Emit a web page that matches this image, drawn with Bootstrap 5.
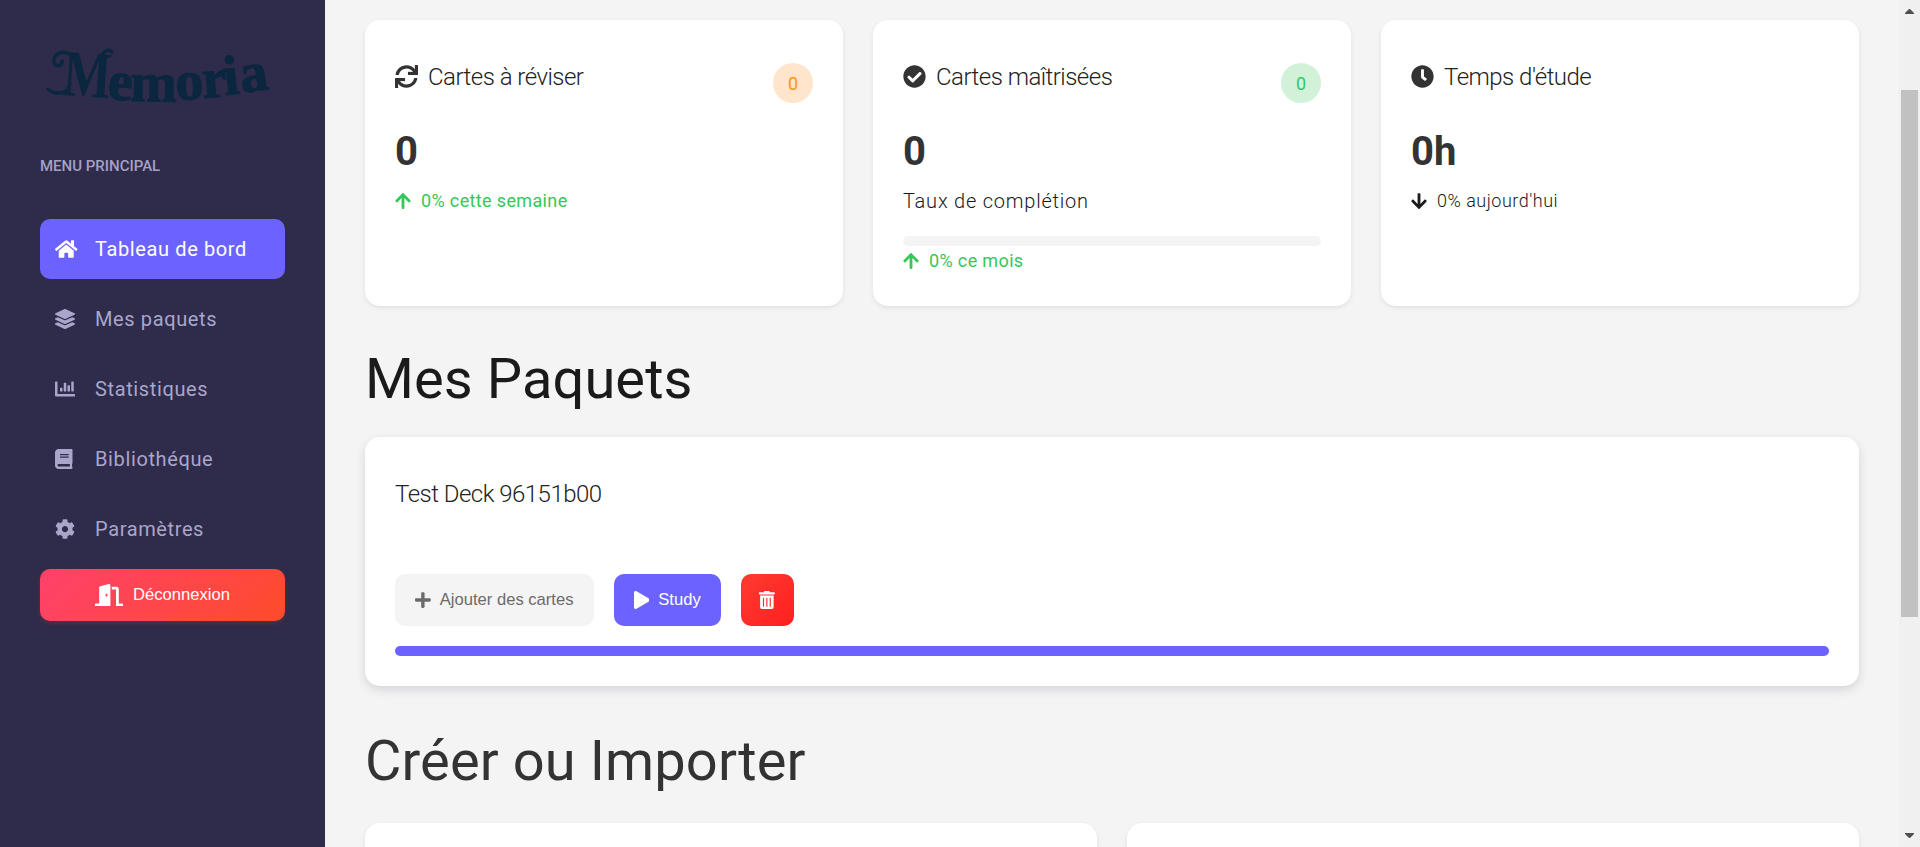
<!DOCTYPE html>
<html lang="fr">
<head>
<meta charset="utf-8">
<meta name="viewport" content="width=device-width, initial-scale=1">
<title>Memoria</title>
<link rel="stylesheet" href="https://cdn.jsdelivr.net/npm/bootstrap@5.3.0/dist/css/bootstrap.min.css">
<style>
body{font-family:Roboto,sans-serif;background:#f4f4f4;color:#1a1a1a;font-size:20px}
svg.fa{display:block;fill:currentColor;flex:none}
.side{width:325px;background:#2f2b4a;padding:0 40px}
.logo{height:151px}
.menu-title{font-size:15px;font-weight:500;line-height:30px;color:#a5a1c4;margin-bottom:38px}
.side .nav{gap:10px}
.side .nav-link{height:60px;padding:0 15px;border-radius:10px;color:#aaa6cb;letter-spacing:.62px;font-size:20px}
.side .nav-link.active{background:#6c63ff;color:#fff}
.ico{width:40px;flex:none}
.tile{background:#fff;border:0;border-radius:15px;padding:30px;box-shadow:0 2px 5px rgba(0,0,0,.08)}
.btn{font-family:"Liberation Sans",Arial,sans-serif;font-size:16.6px;border:0;border-radius:10px;height:52px;padding:0 20px;line-height:1}
.btn svg{margin-right:9px}
.btn-out{color:#fff;background:linear-gradient(135deg,#ff416c,#ff4b2b);box-shadow:0 2px 5px rgba(255,75,43,.2)}
.btn-out svg{margin-right:10px}
.btn-out:hover,.btn-study:hover,.btn-del:hover{color:#fff}
.btn-add{background:#f4f4f4;color:#6b6b6b}
.btn-study{background:#6c63ff;color:#fff}
.btn-del{background:linear-gradient(135deg,#ff3b30,#ff1f1f);color:#fff;width:53px}
.btn-del svg{margin:0}
.page{padding:20px 40px 0;height:847px}
.stats{gap:30px}
.stats .tile{height:286px}
.tile-title{font-size:24px;font-weight:300;letter-spacing:-.52px;color:#222;line-height:28px}
.tile-title svg{margin:-2px 10px 0 0;color:#333}
.stats .tile-title{margin-top:13px}
.stats .head{height:53px}
.count{width:40px;height:40px;font-size:18px;margin-top:13px}
.count-due{background:#ffe5cc;color:#ff9500}
.count-ok{background:#d1f2d9;color:#34c759}
.big{font-size:40px;font-weight:700;line-height:48px;color:#333;margin-top:25px}
.trend{font-size:18px;line-height:22px;gap:10px;letter-spacing:.36px;margin-top:14px}
.trend-flat{font-weight:300;letter-spacing:.5px}
.up{color:#34c759}
.rate{font-weight:300;letter-spacing:.78px;line-height:24px;margin:13px 0 23px}
.meter{height:10px;border-radius:5px;background:#f4f4f4;--bs-progress-bar-bg:#6c63ff}
.meter + .trend{margin-top:4px}
.section-title{font-size:56px;font-weight:400;line-height:66px;margin:0;letter-spacing:.1px}
.deck{height:249px;box-shadow:0 4px 10px rgba(47,43,74,.15)}
.bar-v{width:21px;background:#f0f0f0;padding:9px 0}
.thumb{width:17px;height:527px;margin-top:76px;background:#c1c1c1}
</style>
</head>
<body>
<div class="d-flex vh-100 overflow-hidden">
  <aside class="side flex-shrink-0">
    <div class="logo">
      <svg width="245" height="130" fill="#0b2740" font-family="Liberation Serif,serif" font-weight="700" role="img">
        <text font-size="66" transform="translate(22 95) rotate(4)" textLength="48" lengthAdjust="spacingAndGlyphs">M</text>
        <path d="M31 55c-8-6-18-1-17 7c1 6 9 4 8-1M30 84c-2 11-16 11-22 5M60 58c4-7 8-10 12-6" fill="none" stroke="#0b2740" stroke-width="3.5" stroke-linecap="round"/>
        <text font-size="56" y="99 101 100 98 95 93" x="67 90 136 163 185 202" rotate="4 1 -2 -4 -6 -8" stroke="#0b2740" stroke-width="1">emoria</text>
      </svg>
    </div>
    <div class="menu-title">MENU PRINCIPAL</div>
    <nav class="nav flex-column flex-nowrap">
      <a class="nav-link active d-flex align-items-center" href="#"><span class="ico"><svg class="fa" width="22.5" height="20" viewBox="0 0 576 512"><path d="M280.37 148.26L96 300.11V464a16 16 0 0 0 16 16l112.06-.29a16 16 0 0 0 15.92-16V368a16 16 0 0 1 16-16h64a16 16 0 0 1 16 16v95.64a16 16 0 0 0 16 16.05L464 480a16 16 0 0 0 16-16V300L295.67 148.26a12.19 12.19 0 0 0-15.3 0zM571.6 251.47L488 182.56V44.05a12 12 0 0 0-12-12h-56a12 12 0 0 0-12 12v72.61L318.47 43a48 48 0 0 0-61 0L4.34 251.47a12 12 0 0 0-1.6 16.9l25.5 31A12 12 0 0 0 45.15 301l235.22-193.74a12.19 12.19 0 0 1 15.3 0L530.9 301a12 12 0 0 0 16.9-1.6l25.5-31a12 12 0 0 0-1.7-16.93z"/></svg></span>Tableau de bord</a>
      <a class="nav-link d-flex align-items-center" href="#"><span class="ico"><svg class="fa" width="20" height="20" viewBox="0 0 512 512"><path d="M12.41 148.02l232.94 105.67c6.8 3.09 14.49 3.09 21.29 0l232.94-105.67c16.55-7.51 16.55-32.52 0-40.03L266.65 2.31a25.607 25.607 0 0 0-21.29 0L12.41 107.98c-16.55 7.51-16.55 32.53 0 40.04zm487.18 88.28l-58.09-26.33-161.64 73.27c-7.56 3.43-15.59 5.17-23.86 5.17s-16.29-1.74-23.86-5.17L70.51 209.97l-58.1 26.33c-16.55 7.5-16.55 32.5 0 40l232.94 105.59c6.8 3.08 14.49 3.08 21.29 0L499.59 276.3c16.55-7.5 16.55-32.5 0-40zm0 127.8l-57.87-26.23-161.86 73.37c-7.56 3.43-15.59 5.17-23.86 5.17s-16.29-1.74-23.86-5.17L70.29 337.87 12.41 364.1c-16.55 7.5-16.55 32.5 0 40l232.94 105.59c6.8 3.08 14.49 3.08 21.29 0L499.59 404.1c16.55-7.5 16.55-32.5 0-40z"/></svg></span>Mes paquets</a>
      <a class="nav-link d-flex align-items-center" href="#"><span class="ico"><svg class="fa" width="20" height="20" viewBox="0 0 512 512"><path d="M332.8 320h38.4c6.4 0 12.8-6.4 12.8-12.8V172.8c0-6.4-6.4-12.8-12.8-12.8h-38.4c-6.4 0-12.8 6.4-12.8 12.8v134.4c0 6.4 6.4 12.8 12.8 12.8zm96 0h38.4c6.4 0 12.8-6.4 12.8-12.8V76.8c0-6.4-6.4-12.8-12.8-12.8h-38.4c-6.4 0-12.8 6.4-12.8 12.8v230.4c0 6.4 6.4 12.8 12.8 12.8zm-288 0h38.4c6.4 0 12.8-6.4 12.8-12.8v-70.4c0-6.4-6.4-12.8-12.8-12.8h-38.4c-6.4 0-12.8 6.4-12.8 12.8v70.4c0 6.4 6.4 12.8 12.8 12.8zm96 0h38.4c6.4 0 12.8-6.4 12.8-12.8V108.8c0-6.4-6.4-12.8-12.8-12.8h-38.4c-6.4 0-12.8 6.4-12.8 12.8v198.4c0 6.4 6.4 12.8 12.8 12.8zM496 384H64V80c0-8.84-7.16-16-16-16H16C7.16 64 0 71.16 0 80v336c0 17.67 14.33 32 32 32h464c8.84 0 16-7.16 16-16v-32c0-8.84-7.16-16-16-16z"/></svg></span>Statistiques</a>
      <a class="nav-link d-flex align-items-center" href="#"><span class="ico"><svg class="fa" width="17.5" height="20" viewBox="0 0 448 512"><path d="M448 360V24c0-13.3-10.7-24-24-24H96C43 0 0 43 0 96v320c0 53 43 96 96 96h328c13.3 0 24-10.7 24-24v-16c0-7.5-3.5-14.3-8.9-18.7-4.2-15.4-4.2-59.3 0-74.7 5.4-4.3 8.9-11.1 8.9-18.6zM128 134c0-3.3 2.7-6 6-6h212c3.3 0 6 2.7 6 6v20c0 3.3-2.7 6-6 6H134c-3.3 0-6-2.7-6-6v-20zm0 64c0-3.3 2.7-6 6-6h212c3.3 0 6 2.7 6 6v20c0 3.3-2.7 6-6 6H134c-3.3 0-6-2.7-6-6v-20zm253.4 250H96c-17.7 0-32-14.3-32-32 0-17.6 14.4-32 32-32h285.4c-1.9 17.1-1.9 46.9 0 64z"/></svg></span>Bibliothéque</a>
      <a class="nav-link d-flex align-items-center" href="#"><span class="ico"><svg class="fa" width="20" height="20" viewBox="0 0 512 512"><path d="M487.4 315.7l-42.6-24.6c4.3-23.2 4.3-47 0-70.2l42.6-24.6c4.9-2.8 7.1-8.6 5.5-14-11.1-35.6-30-67.8-54.7-94.6-3.8-4.1-10-5.1-14.8-2.3L380.8 110c-17.9-15.4-38.5-27.3-60.8-35.1V25.8c0-5.6-3.9-10.5-9.4-11.7-36.7-8.2-74.3-7.8-109.2 0-5.5 1.2-9.4 6.1-9.4 11.7V75c-22.2 7.9-42.8 19.8-60.8 35.1L88.7 85.5c-4.9-2.8-11-1.9-14.8 2.3-24.7 26.7-43.6 58.9-54.7 94.6-1.7 5.4.6 11.2 5.5 14L67.3 221c-4.3 23.2-4.3 47 0 70.2l-42.6 24.6c-4.9 2.8-7.1 8.6-5.5 14 11.1 35.6 30 67.8 54.7 94.6 3.8 4.1 10 5.1 14.8 2.3l42.6-24.6c17.9 15.4 38.5 27.3 60.8 35.1v49.2c0 5.6 3.9 10.5 9.4 11.7 36.7 8.2 74.3 7.8 109.2 0 5.5-1.2 9.4-6.1 9.4-11.7v-49.2c22.2-7.9 42.8-19.8 60.8-35.1l42.6 24.6c4.9 2.8 11 1.9 14.8-2.3 24.7-26.7 43.6-58.9 54.7-94.6 1.5-5.5-.7-11.3-5.6-14.1zM256 336c-44.1 0-80-35.9-80-80s35.9-80 80-80 80 35.9 80 80-35.9 80-80 80z"/></svg></span>Paramètres</a>
      <button class="btn btn-out w-100 d-flex align-items-center justify-content-center" type="button"><svg class="fa" width="28" height="22.4" viewBox="0 0 640 512"><path d="M624 448h-80V113.45C544 86.19 522.47 64 496 64H384v64h96v384h144c8.84 0 16-7.16 16-16v-32c0-8.84-7.16-16-16-16zM312.24 1.01l-192 49.74C105.99 54.44 96 67.7 96 82.92V448H16c-8.84 0-16 7.16-16 16v32c0 8.84 7.16 16 16 16h336V33.18c0-21.58-19.56-37.41-39.76-32.17zM264 288c-13.25 0-24-14.33-24-32s10.75-32 24-32 24 14.33 24 32-10.75 32-24 32z"/></svg>Déconnexion</button>
    </nav>
  </aside>

  <main class="page flex-grow-1 overflow-hidden">
    <section class="stats d-flex">
      <div class="tile card flex-fill w-100">
        <div class="head d-flex justify-content-between">
          <div class="tile-title d-flex align-items-center align-self-start"><svg class="fa" width="23" height="23" viewBox="0 0 512 512"><path d="M440.65 12.57l4 82.77A247.16 247.16 0 0 0 255.83 8C134.73 8 33.91 94.92 12.29 209.82A12 12 0 0 0 24.09 224h49.05a12 12 0 0 0 11.67-9.26 175.91 175.91 0 0 1 317-56.94l-101.46-4.86a12 12 0 0 0-12.57 12v47.41a12 12 0 0 0 12 12H500a12 12 0 0 0 12-12V12a12 12 0 0 0-12-12h-47.37a12 12 0 0 0-11.98 12.57zM255.83 432a175.61 175.61 0 0 1-146-77.8l101.8 4.87a12 12 0 0 0 12.57-12v-47.4a12 12 0 0 0-12-12H12a12 12 0 0 0-12 12V500a12 12 0 0 0 12 12h47.35a12 12 0 0 0 12-12.6l-4.15-82.57A247.17 247.17 0 0 0 255.83 504c121.11 0 221.93-86.92 243.55-201.82a12 12 0 0 0-11.8-14.18h-49.05a12 12 0 0 0-11.67 9.26A175.86 175.86 0 0 1 255.83 432z"/></svg>Cartes à réviser</div>
          <span class="count count-due rounded-circle d-flex align-items-center justify-content-center">0</span>
        </div>
        <div class="big">0</div>
        <div class="trend up d-flex align-items-center"><svg class="fa" width="16" height="18" viewBox="0 0 448 512"><path d="M34.9 289.5l-22.2-22.2c-9.4-9.4-9.4-24.6 0-33.9L207 39c9.4-9.4 24.6-9.4 33.9 0l194.3 194.3c9.4 9.4 9.4 24.6 0 33.9L413 289.4c-9.5 9.5-25 9.3-34.3-.4L264 168.6V456c0 13.3-10.7 24-24 24h-32c-13.3 0-24-10.7-24-24V168.6L69.2 289.1c-9.3 9.8-24.8 10-34.3.4z"/></svg>0% cette semaine</div>
      </div>
      <div class="tile card flex-fill w-100">
        <div class="head d-flex justify-content-between">
          <div class="tile-title d-flex align-items-center align-self-start"><svg class="fa" width="23" height="23" viewBox="0 0 512 512"><path d="M504 256c0 136.967-111.033 248-248 248S8 392.967 8 256 119.033 8 256 8s248 111.033 248 248zM227.314 387.314l184-184c6.248-6.248 6.248-16.379 0-22.627l-22.627-22.627c-6.248-6.249-16.379-6.249-22.628 0L216 308.118l-70.059-70.059c-6.248-6.248-16.379-6.248-22.628 0l-22.627 22.627c-6.248 6.248-6.248 16.379 0 22.627l104 104c6.249 6.249 16.379 6.249 22.628.001z"/></svg>Cartes maîtrisées</div>
          <span class="count count-ok rounded-circle d-flex align-items-center justify-content-center">0</span>
        </div>
        <div class="big">0</div>
        <div class="rate">Taux de complétion</div>
        <div class="progress meter"><div class="progress-bar" style="width:0%"></div></div>
        <div class="trend up d-flex align-items-center"><svg class="fa" width="16" height="18" viewBox="0 0 448 512"><path d="M34.9 289.5l-22.2-22.2c-9.4-9.4-9.4-24.6 0-33.9L207 39c9.4-9.4 24.6-9.4 33.9 0l194.3 194.3c9.4 9.4 9.4 24.6 0 33.9L413 289.4c-9.5 9.5-25 9.3-34.3-.4L264 168.6V456c0 13.3-10.7 24-24 24h-32c-13.3 0-24-10.7-24-24V168.6L69.2 289.1c-9.3 9.8-24.8 10-34.3.4z"/></svg>0% ce mois</div>
      </div>
      <div class="tile card flex-fill w-100">
        <div class="head d-flex justify-content-between">
          <div class="tile-title d-flex align-items-center align-self-start"><svg class="fa" width="23" height="23" viewBox="0 0 512 512"><path d="M256,8C119,8,8,119,8,256S119,504,256,504,504,393,504,256,393,8,256,8Zm92.49,313h0l-20,25a16,16,0,0,1-22.49,2.5h0l-67-49.72a40,40,0,0,1-15-31.23V112a16,16,0,0,1,16-16h32a16,16,0,0,1,16,16V256l58,42.5A16,16,0,0,1,348.49,321Z"/></svg>Temps d'étude</div>
        </div>
        <div class="big">0h</div>
        <div class="trend trend-flat d-flex align-items-center"><svg class="fa" width="16" height="18" viewBox="0 0 448 512"><path transform="matrix(1 0 0 -1 0 512)" d="M34.9 289.5l-22.2-22.2c-9.4-9.4-9.4-24.6 0-33.9L207 39c9.4-9.4 24.6-9.4 33.9 0l194.3 194.3c9.4 9.4 9.4 24.6 0 33.9L413 289.4c-9.5 9.5-25 9.3-34.3-.4L264 168.6V456c0 13.3-10.7 24-24 24h-32c-13.3 0-24-10.7-24-24V168.6L69.2 289.1c-9.3 9.8-24.8 10-34.3.4z"/></svg>0% aujourd'hui</div>
      </div>
    </section>

    <h2 class="section-title" style="margin:40px 0 25px">Mes Paquets</h2>
    <section class="tile card deck">
      <div class="tile-title" style="margin-top:13px">Test Deck 96151b00</div>
      <div class="d-flex mt-auto" style="gap:20px;margin-bottom:20px">
        <button class="btn btn-add d-flex align-items-center" type="button"><svg class="fa" width="15.75" height="18" viewBox="0 0 448 512"><path d="M416 208H272V64c0-17.67-14.33-32-32-32h-32c-17.67 0-32 14.33-32 32v144H32c-17.67 0-32 14.33-32 32v32c0 17.67 14.33 32 32 32h144v144c0 17.67 14.33 32 32 32h32c17.67 0 32-14.33 32-32V304h144c17.67 0 32-14.33 32-32v-32c0-17.67-14.33-32-32-32z"/></svg>Ajouter des cartes</button>
        <button class="btn btn-study d-flex align-items-center" type="button"><svg class="fa" width="15.75" height="18" viewBox="0 0 448 512"><path d="M424.4 214.7L72.4 6.6C43.8-10.3 0 6.1 0 47.9V464c0 37.5 40.7 60.1 72.4 41.3l352-208c31.4-18.5 31.5-64.1 0-82.6z"/></svg>Study</button>
        <button class="btn btn-del d-flex align-items-center justify-content-center" type="button" aria-label="Supprimer"><svg class="fa" width="15.75" height="18" viewBox="0 0 448 512"><path d="M32 464a48 48 0 0 0 48 48h288a48 48 0 0 0 48-48V128H32zm272-256a16 16 0 0 1 32 0v224a16 16 0 0 1-32 0zm-96 0a16 16 0 0 1 32 0v224a16 16 0 0 1-32 0zm-96 0a16 16 0 0 1 32 0v224a16 16 0 0 1-32 0zM432 32H312l-9.4-18.7A24 24 0 0 0 281.1 0H166.8a23.72 23.72 0 0 0-21.4 13.3L136 32H16A16 16 0 0 0 0 48v32a16 16 0 0 0 16 16h416a16 16 0 0 0 16-16V48a16 16 0 0 0-16-16z"/></svg></button>
      </div>
      <div class="progress meter"><div class="progress-bar" style="width:100%"></div></div>
    </section>

    <h2 class="section-title" style="margin:42px 0 29px;color:#333">Créer ou Importer</h2>
    <section class="d-flex" style="gap:30px">
      <div class="tile card w-100"></div>
      <div class="tile card w-100"></div>
    </section>
  </main>

  <div class="bar-v d-flex flex-column align-items-center flex-shrink-0">
    <svg width="9" height="5" fill="#505050"><path d="M4 0h1l4 4v1H0V4z"/></svg>
    <div class="thumb"></div>
    <svg class="mt-auto" width="9" height="5" fill="#505050"><path d="M4 5h1l4-4V0H0v1z"/></svg>
  </div>
</div>
<script src="https://cdn.jsdelivr.net/npm/bootstrap@5.3.0/dist/js/bootstrap.bundle.min.js"></script>
</body>
</html>
